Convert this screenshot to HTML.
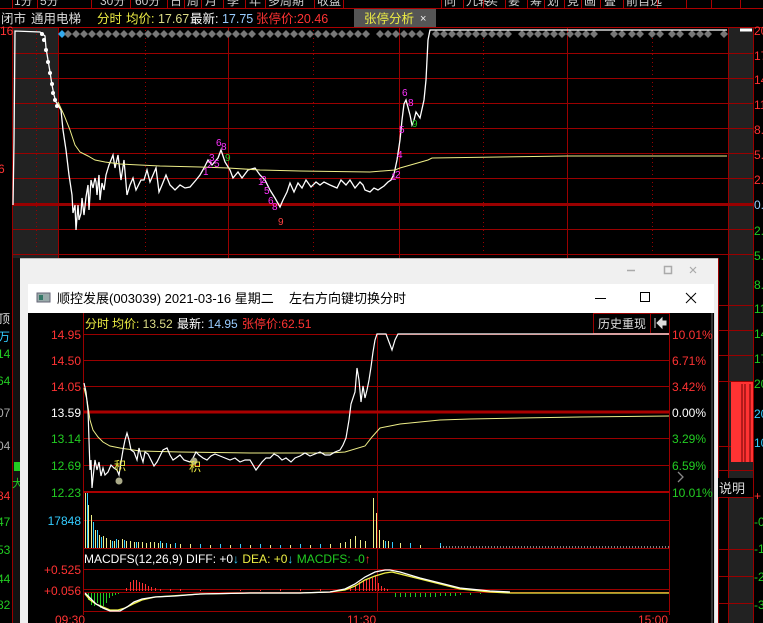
<!DOCTYPE html>
<html><head><meta charset="utf-8"><style>
html,body{margin:0;padding:0;background:#000;width:763px;height:623px;overflow:hidden}
svg{display:block}
text{font-family:"Liberation Sans","Noto Sans CJK SC",sans-serif}
</style></head><body>
<svg width="763" height="623" viewBox="0 0 763 623" xmlns="http://www.w3.org/2000/svg">
<rect width="763" height="623" fill="#000"/>
<!-- top toolbar -->
<g stroke="#a00" fill="none">
<line x1="12.5" y1="0" x2="12.5" y2="8"/><line x1="37.5" y1="0" x2="37.5" y2="8"/><line x1="91.5" y1="0" x2="91.5" y2="8"/><line x1="130.5" y1="0" x2="130.5" y2="8"/><line x1="167.5" y1="0" x2="167.5" y2="8"/><line x1="184.5" y1="0" x2="184.5" y2="8"/><line x1="201.5" y1="0" x2="201.5" y2="8"/><line x1="223.5" y1="0" x2="223.5" y2="8"/><line x1="245.5" y1="0" x2="245.5" y2="8"/><line x1="265.5" y1="0" x2="265.5" y2="8"/><line x1="314.5" y1="0" x2="314.5" y2="8"/><line x1="343.5" y1="0" x2="343.5" y2="8"/>
<line x1="441.5" y1="0" x2="441.5" y2="8"/><line x1="463.5" y1="0" x2="463.5" y2="8"/><line x1="483.5" y1="0" x2="483.5" y2="8"/><line x1="505.5" y1="0" x2="505.5" y2="8"/><line x1="527.5" y1="0" x2="527.5" y2="8"/><line x1="544.5" y1="0" x2="544.5" y2="8"/><line x1="564.5" y1="0" x2="564.5" y2="8"/><line x1="581.5" y1="0" x2="581.5" y2="8"/><line x1="600.5" y1="0" x2="600.5" y2="8"/><line x1="623.5" y1="0" x2="623.5" y2="8"/><line x1="657.5" y1="0" x2="657.5" y2="8"/><line x1="686.5" y1="0" x2="686.5" y2="8"/><line x1="711.5" y1="0" x2="711.5" y2="8"/><line x1="740.5" y1="0" x2="740.5" y2="8"/>
</g>
<g fill="#ccc" font-size="12"><text x="14" y="5">1分</text><text x="40" y="5">5分</text><text x="100" y="5">30分</text><text x="135" y="5">60分</text><text x="170" y="5">日</text><text x="187" y="5">周</text><text x="205" y="5">月</text><text x="227" y="5">季</text><text x="249" y="5">年</text><text x="268" y="5">多周期</text><text x="317" y="5">收盘</text>
<text x="444" y="5">向</text><text x="466" y="5">九转</text><text x="486" y="5">买</text><text x="508" y="5">要</text><text x="530" y="5">筹</text><text x="547" y="5">划</text><text x="567" y="5">竞</text><text x="584" y="5">画</text><text x="604" y="5">叠</text><text x="626" y="5">前自选</text></g>
<line x1="0" y1="8.5" x2="763" y2="8.5" stroke="#a00"/>
<!-- info row -->
<g font-size="12.5"><text x="1" y="23" fill="#ddd">闭市</text><text x="31" y="23" fill="#ddd">通用电梯</text><text x="97" y="23" fill="#ee4">分时</text><text x="126" y="23" fill="#ee4">均价: <tspan fill="#dd8">17.67</tspan></text><text x="190" y="23" fill="#fff">最新: <tspan fill="#9cf">17.75</tspan></text><text x="256" y="23" fill="#f33">张停价:20.46</text></g>
<rect x="354" y="9" width="82" height="18" fill="#555"/>
<text x="364" y="23" font-size="12.5" fill="#ee4">张停分析</text><text x="420" y="22" font-size="11" fill="#eee">×</text>
<line x1="0" y1="27.5" x2="763" y2="27.5" stroke="#a00"/>
<!-- top chart -->
<rect x="12" y="28" width="46" height="230" fill="#222"/>
<rect x="729" y="28" width="24" height="230" fill="#222"/>
<g stroke="#9a0000" stroke-width="1">
<line x1="12" y1="53.5" x2="753" y2="53.5"/><line x1="12" y1="78.5" x2="753" y2="78.5"/><line x1="12" y1="103.5" x2="753" y2="103.5"/><line x1="12" y1="128.5" x2="753" y2="128.5"/><line x1="12" y1="153.5" x2="753" y2="153.5"/><line x1="12" y1="178.5" x2="753" y2="178.5"/><line x1="12" y1="229.5" x2="753" y2="229.5"/><line x1="12" y1="254.5" x2="753" y2="254.5"/>
<line x1="58.5" y1="28" x2="58.5" y2="258"/><line x1="228.5" y1="28" x2="228.5" y2="258"/><line x1="399.5" y1="28" x2="399.5" y2="258"/><line x1="567.5" y1="28" x2="567.5" y2="258"/><line x1="728.5" y1="28" x2="728.5" y2="258"/><line x1="753.5" y1="28" x2="753.5" y2="623"/><line x1="12.5" y1="28" x2="12.5" y2="258"/>
</g>
<g stroke="#9a0000" stroke-dasharray="1,3"><line x1="36.5" y1="30" x2="36.5" y2="258"/><line x1="145.5" y1="30" x2="145.5" y2="258"/><line x1="313.5" y1="30" x2="313.5" y2="258"/><line x1="483.5" y1="30" x2="483.5" y2="258"/><line x1="652.5" y1="30" x2="652.5" y2="258"/></g>
<line x1="12" y1="204.5" x2="753" y2="204.5" stroke="#900" stroke-width="3"/>
<path d="M62 30l4 4-4 4-4-4z" fill="#3ae"/>
<g fill="#777">
<path d="M68 30l4 4-4 4-4-4zM76 30l4 4-4 4-4-4zM84 30l4 4-4 4-4-4zM92 30l4 4-4 4-4-4zM100 30l4 4-4 4-4-4zM108 30l4 4-4 4-4-4zM116 30l4 4-4 4-4-4zM124 30l4 4-4 4-4-4zM132 30l4 4-4 4-4-4zM140 30l4 4-4 4-4-4zM148 30l4 4-4 4-4-4zM156 30l4 4-4 4-4-4zM164 30l4 4-4 4-4-4zM172 30l4 4-4 4-4-4zM180 30l4 4-4 4-4-4zM188 30l4 4-4 4-4-4zM196 30l4 4-4 4-4-4zM204 30l4 4-4 4-4-4zM212 30l4 4-4 4-4-4zM220 30l4 4-4 4-4-4zM228 30l4 4-4 4-4-4zM236 30l4 4-4 4-4-4zM244 30l4 4-4 4-4-4zM252 30l4 4-4 4-4-4zM262 30l4 4-4 4-4-4zM270 30l4 4-4 4-4-4zM278 30l4 4-4 4-4-4zM286 30l4 4-4 4-4-4zM294 30l4 4-4 4-4-4zM302 30l4 4-4 4-4-4zM310 30l4 4-4 4-4-4zM318 30l4 4-4 4-4-4zM326 30l4 4-4 4-4-4zM334 30l4 4-4 4-4-4zM342 30l4 4-4 4-4-4zM350 30l4 4-4 4-4-4zM358 30l4 4-4 4-4-4zM366 30l4 4-4 4-4-4zM380 30l4 4-4 4-4-4zM388 30l4 4-4 4-4-4zM396 30l4 4-4 4-4-4zM404 30l4 4-4 4-4-4zM412 30l4 4-4 4-4-4zM420 30l4 4-4 4-4-4zM436 30l4 4-4 4-4-4zM444 30l4 4-4 4-4-4zM452 30l4 4-4 4-4-4zM460 30l4 4-4 4-4-4zM468 30l4 4-4 4-4-4zM476 30l4 4-4 4-4-4zM484 30l4 4-4 4-4-4zM492 30l4 4-4 4-4-4zM500 30l4 4-4 4-4-4zM508 30l4 4-4 4-4-4zM522 30l4 4-4 4-4-4zM530 30l4 4-4 4-4-4zM538 30l4 4-4 4-4-4zM546 30l4 4-4 4-4-4zM554 30l4 4-4 4-4-4zM562 30l4 4-4 4-4-4zM570 30l4 4-4 4-4-4zM578 30l4 4-4 4-4-4zM586 30l4 4-4 4-4-4zM594 30l4 4-4 4-4-4zM614 30l4 4-4 4-4-4zM622 30l4 4-4 4-4-4zM632 30l4 4-4 4-4-4zM640 30l4 4-4 4-4-4zM652 30l4 4-4 4-4-4zM660 30l4 4-4 4-4-4zM672 30l4 4-4 4-4-4zM680 30l4 4-4 4-4-4zM692 30l4 4-4 4-4-4zM700 30l4 4-4 4-4-4zM708 30l4 4-4 4-4-4zM724 30l4 4-4 4-4-4z"/></g>
<polyline fill="none" stroke="#fff" stroke-width="1.3" points="13,205 14,142 15,31 40,32 45,36 46,48 48,60 50,72 52,85 54,95 56,102 58,105 61,110 63,130 66,150 69,175 72,195 73,213 75,205 76,230 78,205 79,220 81,213 82,198 84,215 86,197 88,185 89,210 91,180 93,188 95,178 96,182 97,195 99,175 100,200 102,183 104,190 106,175 109,165 113,155 115,168 118,155 121,180 124,160 127,195 130,185 133,178 136,190 141,180 144,180 147,170 150,182 153,175 156,168 159,192 162,185 166,175 170,185 175,190 180,185 185,188 190,187 196,180 200,175 204,168 208,160 212,165 218,158 221,150 225,162 230,170 233,178 238,172 242,178 248,170 255,168 260,175 265,180 270,190 275,198 280,207 283,200 287,192 290,183 294,192 298,183 302,188 306,180 311,187 316,182 320,185 324,182 330,185 337,188 341,180 346,185 350,180 355,188 360,182 363,185 365,190 370,192 374,188 378,190 384,186 388,182 391,180 394,174 397,160 400,140 402,120 404,104 406,100 410,115 412,125 414,120 416,112 420,118 424,100 426,80 427,60 428,40 430,30 727,30"/>
<polyline fill="none" stroke="#fff" stroke-width="3" points="740,30 752,30"/>
<g fill="#fff"><circle cx="42" cy="34" r="2"/><circle cx="44" cy="40" r="2"/><circle cx="46" cy="50" r="2"/><circle cx="48" cy="62" r="2"/><circle cx="50" cy="73" r="2"/><circle cx="52" cy="84" r="2"/><circle cx="53" cy="93" r="2"/><circle cx="55" cy="100" r="2"/><circle cx="57" cy="106" r="2"/></g>
<polyline fill="none" stroke="#ee8" stroke-width="1" points="58,102 64,115 70,130 75,145 80,152 88,156 95,160 105,162 120,164 160,166 200,167 228,168 260,170 300,171 370,172 395,170 400,168 428,160 432,158 500,157 567,156 727,156"/>
<g font-size="10" fill="#f3f"><text x="203" y="175">1</text><text x="207" y="168">2</text><text x="209" y="161">3</text><text x="214" y="167">5</text><text x="216" y="146">6</text><text x="221" y="150">8</text><text x="258" y="185">1</text><text x="261" y="183">2</text><text x="264" y="194">5</text><text x="268" y="204">6</text><text x="272" y="210">8</text><text x="391" y="180">1</text><text x="395" y="178">2</text><text x="397" y="158">4</text><text x="399" y="133">5</text><text x="402" y="96">6</text><text x="408" y="106">8</text></g>
<g font-size="10" fill="#2c2"><text x="225" y="161">9</text><text x="412" y="127">9</text></g>
<text x="278" y="225" font-size="10" fill="#f44">9</text>
<g font-size="12"><text x="754" y="35" fill="#f33">20</text><text x="754" y="60" fill="#f33">17</text><text x="754" y="84" fill="#f33">14</text><text x="754" y="109" fill="#f33">11</text><text x="754" y="134" fill="#f33">8.</text><text x="754" y="159" fill="#f33">5.</text><text x="754" y="184" fill="#f33">2.</text><text x="754" y="209" fill="#9cf">0.</text><text x="754" y="235" fill="#2c2">2.</text><text x="754" y="260" fill="#2c2">5.</text>
<text x="754" y="289" fill="#2c2">8.</text><text x="754" y="313" fill="#2c2">11</text><text x="754" y="338" fill="#2c2">14</text><text x="754" y="363" fill="#2c2">17</text><text x="754" y="388" fill="#2c2">20</text><text x="754" y="418" fill="#3cf">20</text><text x="754" y="447" fill="#3cf">10</text><text x="754" y="500" fill="#f33">+</text><text x="754" y="526" fill="#2c2">-0</text><text x="754" y="553" fill="#2c2">-1</text><text x="754" y="581" fill="#2c2">-2</text><text x="754" y="609" fill="#2c2">-3</text></g>
<text x="0" y="35" font-size="12" fill="#f33">16</text>
<text x="-2" y="173" font-size="12" fill="#f33">6</text>
<rect x="729" y="258" width="24" height="365" fill="#222"/>
<g stroke="#9a0000"><line x1="718" y1="305.5" x2="753" y2="305.5"/><line x1="718" y1="330.5" x2="753" y2="330.5"/><line x1="718" y1="355.5" x2="753" y2="355.5"/><line x1="718" y1="381.5" x2="753" y2="381.5"/><line x1="718" y1="446.5" x2="753" y2="446.5"/><line x1="718" y1="470.5" x2="753" y2="470.5"/><line x1="718" y1="497.5" x2="753" y2="497.5"/><line x1="718" y1="549.5" x2="753" y2="549.5"/><line x1="718" y1="576.5" x2="753" y2="576.5"/><line x1="718" y1="603.5" x2="753" y2="603.5"/><line x1="728.5" y1="258" x2="728.5" y2="623"/><line x1="718.5" y1="258" x2="718.5" y2="623"/></g>
<rect x="731" y="382" width="22" height="80" fill="#f33"/>
<g stroke="#600"><line x1="742" y1="384" x2="742" y2="462"/><line x1="745" y1="384" x2="745" y2="462"/><line x1="750" y1="384" x2="750" y2="462"/></g>
<rect x="718" y="478" width="35" height="19" fill="#000"/>
<text x="719" y="493" font-size="13" fill="#ddd">说明</text>
<rect x="12" y="258" width="16" height="365" fill="#111"/>
<g stroke="#9a0000"><line x1="12.5" y1="258" x2="12.5" y2="623"/><line x1="28.5" y1="258" x2="28.5" y2="623"/></g>
<g font-size="12"><text x="-2" y="323" fill="#ddd">顶</text><text x="-2" y="341" fill="#3cf">万</text><text x="-3" y="358" fill="#2c2">14</text><text x="-3" y="385" fill="#2c2">64</text><text x="-3" y="417" fill="#aaa">07</text><text x="-3" y="450" fill="#aaa">04</text><text x="-3" y="500" fill="#f33">84</text><text x="-3" y="526" fill="#2c2">47</text><text x="-3" y="554" fill="#2c2">53</text><text x="-3" y="583" fill="#2c2">44</text><text x="-3" y="609" fill="#2c2">82</text></g>
<rect x="14" y="462" width="6" height="9" fill="#2c2"/>
<text x="12" y="487" font-size="11" fill="#2c2">大</text>
<!-- dialog outer -->
<rect x="20" y="258" width="698" height="365" fill="#f0f0f0"/>
<line x1="20" y1="258.5" x2="718" y2="258.5" stroke="#bbb"/>
<line x1="627" y1="270.5" x2="635" y2="270.5" stroke="#aaa" stroke-width="1.5"/>
<rect x="664.5" y="266.5" width="7" height="7" fill="none" stroke="#aaa" stroke-width="1.5"/>
<path d="M690 267l6 6M696 267l-6 6" stroke="#aaa" stroke-width="1.2"/>
<rect x="28" y="284" width="686" height="339" fill="#000"/>
<rect x="28" y="284" width="686" height="29" fill="#fff"/>
<rect x="37" y="293" width="13" height="9" fill="#9aa" stroke="#667"/>
<rect x="39" y="295" width="4" height="5" fill="#376"/>
<text x="57" y="303" font-size="13" fill="#000">顺控发展(003039) 2021-03-16 星期二</text>
<text x="289" y="303" font-size="13" fill="#000">左右方向键切换分时</text>
<line x1="595" y1="298.5" x2="606" y2="298.5" stroke="#000"/>
<rect x="640.5" y="292.5" width="9" height="9" fill="none" stroke="#000"/>
<path d="M686 293l10 10M696 293l-10 10" stroke="#000"/>
<line x1="714.5" y1="313" x2="714.5" y2="623" stroke="#ddd"/>
<line x1="712" y1="313" x2="712" y2="623" stroke="#333" stroke-width="2"/>
<g stroke="#9a0000"><line x1="83" y1="334.5" x2="669" y2="334.5"/><line x1="83" y1="360.5" x2="669" y2="360.5"/><line x1="83" y1="386.5" x2="669" y2="386.5"/><line x1="83" y1="438.5" x2="669" y2="438.5"/><line x1="83" y1="465.5" x2="669" y2="465.5"/><line x1="83" y1="520.5" x2="669" y2="520.5"/><line x1="83" y1="548.5" x2="669" y2="548.5"/><line x1="83" y1="569.5" x2="669" y2="569.5"/><line x1="83" y1="589.5" x2="669" y2="589.5"/><line x1="83" y1="592.5" x2="669" y2="592.5"/><line x1="83" y1="611.5" x2="669" y2="611.5"/><line x1="83.5" y1="313" x2="83.5" y2="615"/><line x1="669.5" y1="313" x2="669.5" y2="615"/><line x1="377.5" y1="334" x2="377.5" y2="611"/></g>
<line x1="83" y1="412" x2="669" y2="412" stroke="#a00" stroke-width="3"/>
<line x1="83" y1="492" x2="669" y2="492" stroke="#a00" stroke-width="2"/>
<g font-size="12"><text x="85" y="328" fill="#ee4">分时</text><text x="112" y="328" fill="#ee4">均价: <tspan fill="#dd8">13.52</tspan></text><text x="177" y="328" fill="#fff">最新: <tspan fill="#9cf">14.95</tspan></text><text x="242" y="328" fill="#f33">张停价:62.51</text></g>
<rect x="593.5" y="313.5" width="57" height="20" fill="none" stroke="#900"/>
<rect x="650.5" y="313.5" width="19" height="20" fill="none" stroke="#900"/>
<text x="598" y="328" font-size="12" fill="#ddd">历史重现</text>
<path d="M655 318v10M657 323l5-5v3h4v4h-4v3z" stroke="#ddd" fill="#ddd" stroke-width="1"/>
<g font-size="12" text-anchor="end"><text x="81" y="339" fill="#f33">14.95</text><text x="81" y="365" fill="#f33">14.50</text><text x="81" y="391" fill="#f33">14.05</text><text x="81" y="417" fill="#fff">13.59</text><text x="81" y="443" fill="#2c2">13.14</text><text x="81" y="470" fill="#2c2">12.69</text><text x="81" y="497" fill="#2c2">12.23</text><text x="81" y="525" fill="#3cf">17848</text><text x="81" y="574" fill="#f33">+0.525</text><text x="81" y="595" fill="#f33">+0.056</text></g>
<g font-size="12"><text x="672" y="339" fill="#f33">10.01%</text><text x="672" y="365" fill="#f33">6.71%</text><text x="672" y="391" fill="#f33">3.42%</text><text x="672" y="417" fill="#fff">0.00%</text><text x="672" y="443" fill="#2c2">3.29%</text><text x="672" y="470" fill="#2c2">6.59%</text><text x="672" y="497" fill="#2c2">10.01%</text></g>
<path d="M678 472l5 5-5 5" stroke="#888" fill="none" stroke-width="1.3"/>
<g font-size="12" fill="#f33"><text x="55" y="624">09:30</text><text x="347" y="624">11:30</text><text x="638" y="624">15:00</text></g>
<polyline fill="none" stroke="#ee8" stroke-width="1" points="84,388 87,400 90,420 93,430 98,437 103,442 110,446 120,448 140,451 180,452 250,453 330,453 345,452 365,446 372,437 380,428 390,426 400,424 440,420 470,419 520,418 580,417 669,416"/>
<polyline fill="none" stroke="#fff" stroke-width="1.2" points="84,383 86,392 88,410 89,440 90,470 91,460 92,488 93,478 95,460 97,470 99,462 101,476 103,468 105,475 108,472 111,465 114,468 117,470 119,475 121,462 123,450 125,440 127,433 129,440 131,450 134,452 137,460 139,448 141,456 143,462 145,452 148,454 151,460 154,466 157,462 160,456 163,450 167,448 170,455 173,460 176,458 180,455 184,460 190,462 193,458 196,452 199,455 203,458 207,460 211,456 215,454 220,456 225,458 230,460 235,458 240,462 245,460 250,460 256,470 259,466 262,462 266,458 270,458 274,454 278,456 282,460 286,458 291,462 295,458 300,456 305,453 310,456 315,454 320,452 325,455 330,455 335,452 340,450 343,445 346,438 349,420 351,404 353,398 355,392 357,368 359,380 361,402 363,386 365,398 367,390 369,380 371,367 373,352 375,340 377,334 386,334 389,342 392,350 395,340 398,334 669,334"/>
<circle cx="119" cy="481" r="3.5" fill="#aa8"/><circle cx="194" cy="461" r="3.5" fill="#aa8"/>
<g font-size="12" fill="#ee4"><text x="114" y="470">积</text><text x="189" y="471">积</text></g>
<g stroke="#ee8" stroke-width="1"><path d="M85.5 548V493M88.5 548V505M91.5 548V515M95.5 548V530M99.5 548V535M103.5 548V536M106.5 548V538M110.5 548V540M114.5 548V541M118.5 548V540M122.5 548V539M126.5 548V541M130.5 548V541M134.5 548V542M138.5 548V542M142.5 548V542M146.5 548V543M150.5 548V542M154.5 548V542M158.5 548V543M162.5 548V543M170.5 548V544M180.5 548V544M190.5 548V544M210.5 548V545M230.5 548V545M250.5 548V545M270.5 548V545M290.5 548V545M310.5 548V545M330.5 548V544M340.5 548V543M345.5 548V542M350.5 548V539M355.5 548V536M360.5 548V540M365.5 548V541M373.5 548V498M376.5 548V513M379.5 548V530M383.5 548V540M388.5 548V541M400.5 548V543M420.5 548V545"/></g>
<g stroke="#3cf" stroke-width="1"><path d="M87.5 548V493M93.5 548V522M97.5 548V530M101.5 548V537M112.5 548V541M116.5 548V539M124.5 548V540M136.5 548V542M160.5 548V541M166.5 548V543M175.5 548V543M200.5 548V544M220.5 548V544M240.5 548V544M260.5 548V544M280.5 548V545M300.5 548V544M320.5 548V544M385.5 548V541M392.5 548V542M410.5 548V543M440.5 548V543"/></g>
<g stroke="#fff" stroke-width="1" stroke-dasharray="1,2"><line x1="440" y1="547" x2="669" y2="547"/></g>
<text x="84" y="563" font-size="12" fill="#fff">MACDFS(12,26,9) DIFF: +0<tspan fill="#3cf">↓</tspan> <tspan fill="#ee4">DEA: +0</tspan><tspan fill="#3cf">↓</tspan> <tspan fill="#2c2">MACDFS: -0</tspan><tspan fill="#f33">↑</tspan></text>
<g stroke="#f33"><path d="M126.5 591V588M130.5 591V582M133.5 591V580M136.5 591V580M139.5 591V582M142.5 591V583M145.5 591V584M148.5 591V586M151.5 591V587M155.5 591V588M160.5 591V589M170.5 591V589M180.5 591V589M200.5 591V590M240.5 591V590M260.5 591V590M280.5 591V589M300.5 591V589M320.5 591V589M340.5 591V590M350.5 591V588M355.5 591V585M359.5 591V582M363.5 591V580M366.5 591V580M369.5 591V579M372.5 591V578M375.5 591V576M378.5 591V583M381.5 591V586M384.5 591V588M387.5 591V589"/></g>
<g stroke="#2c2"><path d="M88.5 593V600M91.5 593V605M94.5 593V606M97.5 593V603M100.5 593V608M103.5 593V606M106.5 593V603M109.5 593V598M112.5 593V596M115.5 593V595M118.5 593V594M395.5 593V597M400.5 593V597M405.5 593V597M410.5 593V597M415.5 593V597M420.5 593V597M425.5 593V597M430.5 593V597M435.5 593V597M440.5 593V596M445.5 593V596M450.5 593V596M455.5 593V596M460.5 593V595M470.5 593V595M480.5 593V594"/></g>
<polyline fill="none" stroke="#ee4" stroke-width="1.3" points="85,594 90,600 96,604 103,607 110,610 118,610 125,608 133,604 142,600 155,597 170,596 200,594 250,593 300,593 330,592 345,590 355,586 365,580 375,576 385,573 392,572 400,574 420,579 440,584 460,589 490,592 510,593 669,593"/>
<polyline fill="none" stroke="#fff" stroke-width="1.3" points="85,593 90,598 96,604 103,608 110,611 120,611 127,607 134,602 142,599 155,597 175,596 200,594 250,593 300,593 330,592 345,589 355,584 365,577 375,572 385,570 390,570 400,572 420,578 440,583 460,588 490,591 510,592"/>
</svg>
</body></html>
